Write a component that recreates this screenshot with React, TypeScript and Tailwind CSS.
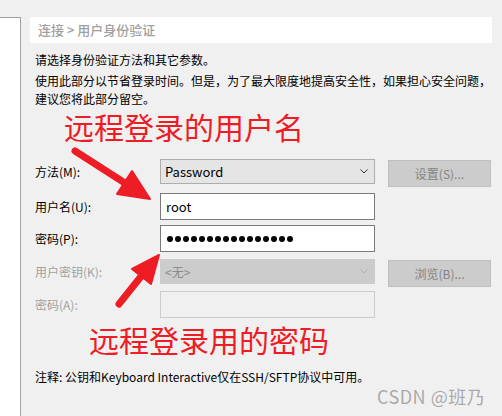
const FONT = { fontFamily: '"Noto Sans CJK SC", "Noto Sans", sans-serif' };

function Chevron({ color }: { color: string }) {
  return (
    <svg width="8" height="5" viewBox="0 0 8 5" fill="none">
      <path d="M0.5 0.5 L4 4 L7.5 0.5" stroke={color} strokeWidth="1" />
    </svg>
  );
}

function Label({ text, muted = false, h }: { text: string; muted?: boolean; h: string }) {
  return (
    <div className={`w-[125px] flex items-center ${h} ${muted ? "text-[#a0a0a0]" : "text-black"}`}>
      {text}
    </div>
  );
}

function Button({ text }: { text: string }) {
  return (
    <div className="ml-[13px] mt-px w-[103px] h-[27px] flex items-center justify-center bg-[#cccccc] border border-[#bfbfbf] text-[#838383]">
      {text}
    </div>
  );
}

function Arrows() {
  return (
    <svg className="absolute inset-0 pointer-events-none" width="502" height="416" viewBox="0 0 502 416">
      <g fill="#ee1c25" stroke="#ee1c25" strokeLinecap="round" strokeLinejoin="round">
        <line x1="75" y1="151" x2="128" y2="185" strokeWidth="7" />
        <polygon points="150,199 117,194 132,171" strokeWidth="2" />
        <line x1="119" y1="304" x2="143" y2="274" strokeWidth="7" />
        <polygon points="159,255 151,284 132,269" strokeWidth="2" />
      </g>
    </svg>
  );
}

export default function App() {
  const dots = Array.from({ length: 16 });
  return (
    <div className="relative w-[502px] h-[416px] bg-[#f0f0f0] overflow-hidden flex text-[12px]" style={FONT}>
      <div className="w-[21px] mt-[17px] bg-white border-t border-r border-[#a0a0a0]" />

      <div className="flex-1 flex flex-col pl-[9px] pt-[17px]">
        <div className="h-[26px] w-[462px] bg-white flex items-center pl-[8px] text-[13px] font-medium text-[#a0a0a0]">
          连接 &gt; 用户身份验证
        </div>

        <div className="pl-[5px] flex flex-col">
          <div className="mt-[8px] leading-[18px]">请选择身份验证方法和其它参数。</div>
          <div className="mt-[3px] leading-[18px]">
            使用此部分以节省登录时间。但是，为了最大限度地提高安全性，如果担心安全问题，
            <br />
            建议您将此部分留空。
          </div>

          <div className="mt-[3px] ml-[29px] text-[30px] leading-[30px] text-[#ee1c25]">远程登录的用户名</div>

          <div className="mt-[18px] flex flex-col">
            <div className="flex items-start h-[34px]">
              <Label text="方法(M):" h="h-[25px]" />
              <div className="w-[215px] h-[25px] bg-[#e5e5e5] border border-[#adadad] flex items-center justify-between pl-[4px] pr-[6px] text-[13px]">
                <span>Password</span>
                <Chevron color="#333333" />
              </div>
              <Button text="设置(S)..." />
            </div>

            <div className="flex items-start h-[32px]">
              <Label text="用户名(U):" h="h-[27px]" />
              <div className="w-[215px] h-[27px] bg-white border border-[#7a7a7a] flex items-center pl-[5px] text-[13px]">
                root
              </div>
            </div>

            <div className="flex items-start h-[34px]">
              <Label text="密码(P):" h="h-[27px]" />
              <div className="w-[215px] h-[27px] bg-white border border-[#7a7a7a] flex items-center gap-[2px] pl-[6px]">
                {dots.map((_, i) => (
                  <span key={i} className="w-[6px] h-[6px] rounded-full bg-black" />
                ))}
              </div>
            </div>

            <div className="flex items-start h-[32px]">
              <Label text="用户密钥(K):" muted h="h-[25px]" />
              <div className="w-[215px] h-[25px] bg-[#cccccc] border border-[#cccccc] flex items-center justify-between pl-[4px] pr-[6px] text-[#8a8a8a]">
                <span>&lt;无&gt;</span>
                <Chevron color="#b0b0b0" />
              </div>
              <Button text="浏览(B)..." />
            </div>

            <div className="flex items-start h-[27px]">
              <Label text="密码(A):" muted h="h-[27px]" />
              <div className="w-[215px] h-[27px] bg-[#f0f0f0] border border-[#cccccc]" />
            </div>
          </div>

          <div className="mt-[6px] ml-[54px] text-[30px] leading-[30px] text-[#ee1c25]">远程登录用的密码</div>

          <div className="mt-[14px] leading-[18px]">注释: 公钥和Keyboard Interactive仅在SSH/SFTP协议中可用。</div>
        </div>
      </div>

      <div className="absolute left-[377px] top-[384px] text-[18px] leading-[24px] tracking-[0.5px] text-[#a8a8a8] [text-shadow:0_0_1px_#ffffff]">
        CSDN @班乃
      </div>

      <Arrows />
    </div>
  );
}
